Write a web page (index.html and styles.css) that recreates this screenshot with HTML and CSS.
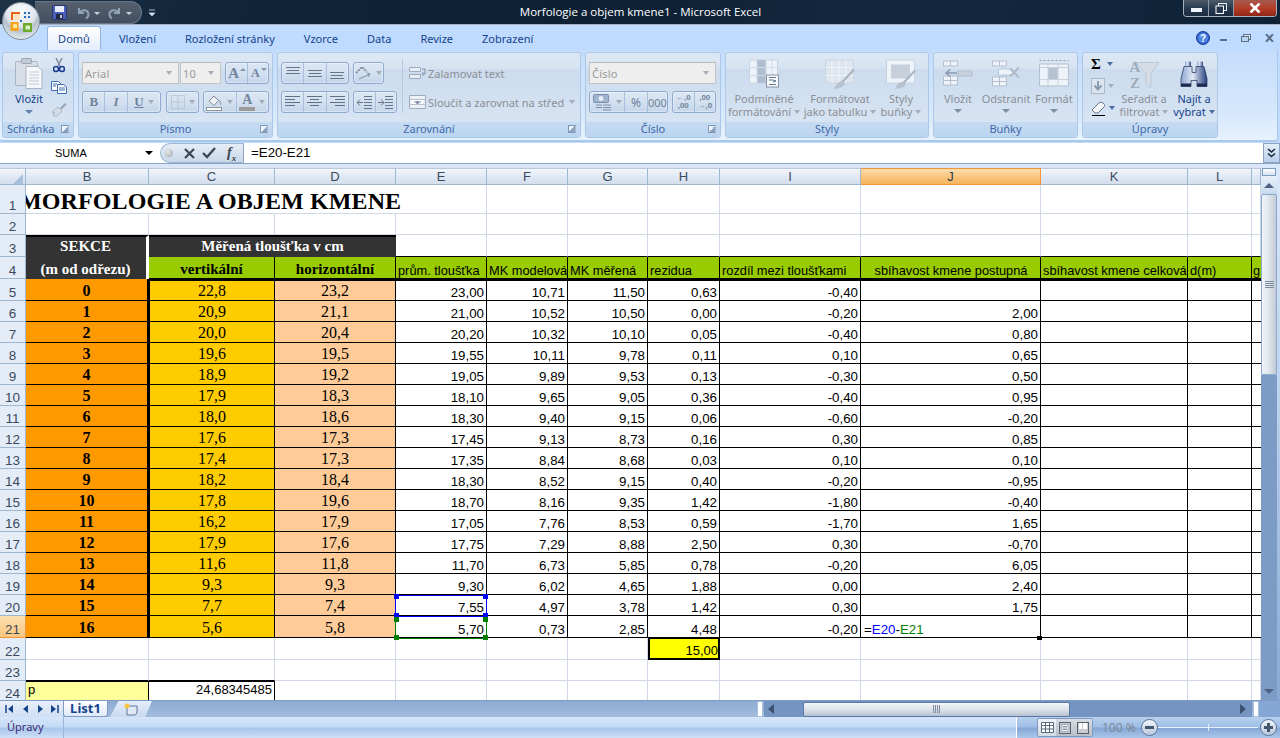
FILE: index.html
```html
<!DOCTYPE html>
<html lang="cs">
<head>
<meta charset="utf-8">
<title>Morfologie a objem kmene1 - Microsoft Excel</title>
<link rel="stylesheet" href="styles.css">
</head>
<body>
<div class="app">
<button class="office" aria-label="Office">
<svg width="42" height="42" viewBox="0 0 42 42">
<defs>
<radialGradient id="orb" cx="50%" cy="25%" r="80%"><stop offset="0" stop-color="#ffffff"/><stop offset=".5" stop-color="#dfe5ec"/><stop offset=".62" stop-color="#b5c0cc"/><stop offset="1" stop-color="#eef2f6"/></radialGradient>
</defs>
<circle cx="21" cy="21" r="18.5" fill="url(#orb)" stroke="#7f8a96"/>
<path d="M11 12h9v3h-6v5h-3z" fill="#e8631b"/>
<path d="M13 14h7v6h-7z" fill="#fbe3c4"/>
<path d="M10.500 22h8v9h-8z" fill="#f5a21d"/>
<path d="M13 24h4v4h-4z" fill="#ffe59c"/>
<path d="M23 23h9v9h-9z" fill="#6aa92a"/>
<path d="M25.500 25.500h4.500v4h-4.500z" fill="#e3f2c6"/>
<path d="M23 11h8v9h-8z" fill="#e7eef7"/>
<g fill="#2a6bc4"><rect x="24" y="12" width="2" height="2"/><rect x="28" y="12" width="2" height="2"/><rect x="24" y="16" width="2" height="2"/><rect x="28" y="16" width="2" height="2"/><rect x="20" y="20" width="2" height="2"/></g>
</svg>
</button>

<header class="titlebar">
<div class="qat">
<svg width="15" height="15" viewBox="0 0 15 15"><rect x=".5" y=".5" width="14" height="14" rx="1" fill="#4a5fb8" stroke="#2a3570"/><rect x="3" y="1" width="9" height="6" fill="#e6edf8"/><rect x="4" y="9" width="7" height="5" fill="#20283f"/><rect x="8" y="10" width="2" height="3" fill="#c8d0e0"/></svg>
<svg class="qat-undo" width="14" height="14" viewBox="0 0 14 14"><path d="M3 2v5h5M3.500 6.500C6 3 12 3.500 12.500 8c.2 2-1 3.500-2.500 4.500" fill="none" stroke="#8fa2b7" stroke-width="2"/></svg>
<i class="qat-arrow"></i>
<svg class="qat-redo" width="14" height="14" viewBox="0 0 14 14"><path d="M11 2v5H6M10.500 6.500C8 3 2 3.500 1.500 8c-.2 2 1 3.500 2.500 4.500" fill="none" stroke="#8fa2b7" stroke-width="2"/></svg>
<i class="qat-arrow"></i>
</div>
<svg class="qat-more" width="8" height="8" viewBox="0 0 8 8"><path d="M1 1h6M1 4h6L4 7z" fill="#c9d6e6" stroke="#c9d6e6" stroke-width=".8"/></svg>
<div class="doc-title">Morfologie a objem kmene1 - Microsoft Excel</div>
<div class="winbtns">
<span class="wb wb-min"><i></i></span>
<span class="wb wb-max"><svg width="12" height="11" viewBox="0 0 12 11"><rect x="3.500" y=".5" width="8" height="7" fill="none" stroke="#e8eef5"/><rect x="1" y="3" width="7.500" height="7.500" fill="#25384e" stroke="#fff"/></svg></span>
<span class="wb wb-close"><svg width="12" height="10" viewBox="0 0 12 10"><path d="M1.500 .5L10.500 9.500M10.500 .5L1.500 9.500" stroke="#fff" stroke-width="2.600"/></svg></span>
</div>
</header>

<nav class="tabs">
<span class="tab active">Domů</span><span class="tab">Vložení</span><span class="tab">Rozložení stránky</span><span class="tab">Vzorce</span><span class="tab">Data</span><span class="tab">Revize</span><span class="tab">Zobrazení</span>
<div class="doc-ctrl">
<svg width="14" height="14" viewBox="0 0 14 14"><circle cx="7" cy="7" r="6.500" fill="#2f62c9" stroke="#1d3f92"/><circle cx="7" cy="7" r="5" fill="#4e86e6"/><text x="7" y="10.500" text-anchor="middle" class="help-q">?</text></svg>
<svg class="dc-min" width="8" height="8" viewBox="0 0 8 8"><rect y="5" width="7" height="2" fill="#5b7086"/></svg>
<svg class="dc-max" width="10" height="8" viewBox="0 0 10 8"><rect x="2.500" y=".5" width="7" height="5" fill="#dfe9f6" stroke="#5b7086"/><rect x=".5" y="2.500" width="7" height="5" fill="#bcd3ef" stroke="#5b7086"/></svg>
<svg class="dc-x" width="9" height="8" viewBox="0 0 9 8"><path d="M1 0l7 8M8 0L1 8" stroke="#5b7086" stroke-width="2"/></svg>
</div>
</nav>

<div class="ribbon">
<section class="group g-clip">
<div class="body">
<div class="big paste">
<svg width="28" height="31" viewBox="0 0 28 31"><rect x=".5" y="3.500" width="22" height="24" rx="1" fill="#d9dee6" stroke="#aab4c2"/><rect x="6.500" y=".5" width="10" height="5" rx="1" fill="#c3cad4" stroke="#9ba6b5"/><path d="M11 8.500h12l4 4v18H11z" fill="#f5f7fa" stroke="#aab4c2"/><path d="M14 14h10M14 17h10M14 20h10M14 23h10M14 26h10" stroke="#c2cbd7"/></svg>
<span class="lbl">Vložit</span><i class="down"></i>
</div>
<div class="clip-small">
<svg width="12" height="15" viewBox="0 0 12 15"><path d="M3 0l4 8M9 0L5 8" stroke="#7f8ea0" stroke-width="1.500"/><circle cx="3" cy="11" r="2.500" fill="none" stroke="#1e3d92" stroke-width="1.600"/><circle cx="9" cy="11" r="2.500" fill="none" stroke="#1e3d92" stroke-width="1.600"/></svg>
<svg width="16" height="13" viewBox="0 0 16 13"><path d="M.5.500h7l2 2v7h-9z" fill="#fff" stroke="#3a6cb5"/><path d="M6.500 3.500h6l3 2.500v6.500h-9z" fill="#fff" stroke="#3a6cb5"/><path d="M2 3h4M2 5h3M8 7h6M8 9h6" stroke="#3a6cb5"/></svg>
<svg width="16" height="15" viewBox="0 0 16 15"><path d="M9 6l5-5 1.500 1.500-5 5z" fill="#98a4b3"/><path d="M2 9l5-4 4 4-5 5H3l-1-2 2-1-3 0z" fill="#d6dde6" stroke="#a3aebc" stroke-width=".8"/></svg>
</div>
</div>
<div class="label">Schránka<i class="launcher"></i></div>
</section>

<section class="group g-font">
<div class="body rows">
<div class="row">
<span class="select s-font">Arial<i class="tri"></i></span><span class="select s-size">10<i class="tri"></i></span>
<span class="btnbox bb-grow"><span class="cell"><span class="gl-a big-a">A</span><i class="up"></i></span><span class="cell"><span class="gl-a small-a">A</span><i class="dn"></i></span></span>
</div>
<div class="row r2">
<span class="btnbox bb-biu"><span class="cell c-b">B</span><span class="cell c-i">I</span><span class="cell c-u">U<i class="tri"></i></span></span>
<span class="btnbox bb-border"><span class="cell">
<svg width="14" height="14" viewBox="0 0 14 14"><path d="M.5.500h13v13H.5zM7 .5v13M.5 7h13" fill="none" stroke="#a5b2c3" stroke-dasharray="1 1"/></svg><i class="tri"></i></span></span>
<span class="btnbox bb-color"><span class="cell">
<svg width="17" height="17" viewBox="0 0 17 17"><path d="M3 7l5-5 4.500 4.500L8 11.500z" fill="#f0f2f5" stroke="#7f8b9b"/><path d="M12 6c2 1 3 3 2.500 5" stroke="#a6b0bd" fill="none" stroke-width="1.500"/><rect x=".5" y="13.500" width="15" height="3" fill="#fbfbf6" stroke="#8c96a3"/></svg><i class="tri"></i></span><span class="cell"><span class="fc-a">A<b></b></span><i class="tri"></i></span></span>
</div>
</div>
<div class="label center">Písmo<i class="launcher"></i></div>
</section>

<section class="group g-align">
<div class="body al-body">
<div class="rows al-left">
<div class="row">
<span class="btnbox bb-3"><span class="cell"><svg width="14" height="12" viewBox="0 0 14 12"><path d="M0 .5h14M1 3.500h12M0 6.500h14" stroke="#66778c"/></svg></span><span class="cell"><svg width="14" height="12" viewBox="0 0 14 12"><path d="M0 3.500h14M1 6.500h12M0 9.500h14" stroke="#66778c"/></svg></span><span class="cell"><svg width="14" height="12" viewBox="0 0 14 12"><path d="M0 5.500h14M1 8.500h12M0 11.500h14" stroke="#66778c"/></svg></span></span>
<span class="btnbox bb-or"><span class="cell">
<svg width="17" height="15" viewBox="0 0 17 15"><path d="M1 7l6-6 5 5" fill="none" stroke="#7f8fa3" stroke-width="2" stroke-dasharray="2 1"/><path d="M4 13L15 8" stroke="#7f8fa3"/><path d="M15 8l-3-1M15 8l-2 3" stroke="#7f8fa3"/></svg><i class="tri"></i></span></span>
</div>
<div class="row r2">
<span class="btnbox bb-3"><span class="cell"><svg width="15" height="12" viewBox="0 0 15 12"><path d="M0 .5h15M0 3.500h10M0 6.500h15M0 9.500h10" stroke="#5f7188"/></svg></span><span class="cell"><svg width="15" height="12" viewBox="0 0 15 12"><path d="M0 .5h15M3 3.500h9M0 6.500h15M3 9.500h9" stroke="#5f7188"/></svg></span><span class="cell"><svg width="15" height="12" viewBox="0 0 15 12"><path d="M0 .5h15M5 3.500h10M0 6.500h15M5 9.500h10" stroke="#5f7188"/></svg></span></span>
<span class="btnbox bb-ind"><span class="cell"><svg width="15" height="13" viewBox="0 0 15 13"><path d="M7 .5h8M7 3.500h8M7 6.500h8M7 9.500h8M7 12.500h8M6 6.500H0M3 3.500l-3 3 3 3" fill="none" stroke="#64768c"/></svg></span><span class="cell"><svg width="15" height="13" viewBox="0 0 15 13"><path d="M7 .5h8M7 3.500h8M7 6.500h8M7 9.500h8M7 12.500h8M0 6.500h6M3 3.500l3 3-3 3" fill="none" stroke="#64768c"/></svg></span></span>
</div>
</div>
<i class="vsep"></i>
<div class="rows al-right">
<div class="row txt-row"><svg width="17" height="14" viewBox="0 0 17 14"><path d="M.5 1.500h11v4H.5zM.5 8.500h11v4H.5z" fill="#e8eef5" stroke="#9dabbc"/><path d="M13 3h3v5h-3M14.500 6.500l-1.500 1.500 1.500 1.500" fill="none" stroke="#8292a6"/></svg><span class="lbl">Zalamovat text</span></div>
<div class="row r2 txt-row"><svg width="17" height="14" viewBox="0 0 17 14"><path d="M.5 .5h16v13H.5z" fill="#eef2f7" stroke="#9dabbc"/><path d="M.5 4.500h16M.5 9.500h16" stroke="#b5c1cf"/><rect x="3" y="5" width="11" height="4" fill="#fff"/><path d="M5 7h7" stroke="#768aa3"/><text x="8.500" y="9" text-anchor="middle" class="mini-a">a</text></svg><span class="lbl">Sloučit a zarovnat na střed</span><i class="tri"></i></div>
</div>
</div>
<div class="label center">Zarovnání<i class="launcher"></i></div>
</section>

<section class="group g-num">
<div class="body rows">
<div class="row"><span class="select s-num">Číslo<i class="tri"></i></span></div>
<div class="row r2">
<span class="btnbox bb-cur"><span class="cell c-cur"><svg width="19" height="17" viewBox="0 0 19 17"><rect x=".5" y=".5" width="15" height="8" rx="1" fill="#9fb4ce" stroke="#7c90ab"/><circle cx="8" cy="4.500" r="2.500" fill="#e6edf6"/><path d="M3 11h6M3 13.500h6M10 11h8M10 13.500h8M10 16h8" stroke="#7e90a8"/></svg><i class="tri"></i></span><span class="cell c-pc">%</span><span class="cell c-th">000</span></span>
<span class="btnbox bb-dec"><span class="cell c-dec"><span>←,0</span><span>,00</span></span><span class="cell c-dec"><span>,00</span><span>→,0</span></span></span>
</div>
</div>
<div class="label center">Číslo<i class="launcher"></i></div>
</section>

<section class="group g-styles">
<div class="body bigs">
<div class="big b-cf">
<svg width="30" height="30" viewBox="0 0 30 30"><path d="M.5.500h28v23H.5z" fill="#eef3f9" stroke="#c8d3e0"/><path d="M8 .5h9v23H8z" fill="#aebdcf"/><path d="M.5 8h28M.5 16h28M8 .5v23M17 .5v23M23 .5v23" stroke="#d1dae6"/><rect x="17.500" y="15.500" width="12" height="12" fill="#f7f9fb" stroke="#8293a8"/><path d="M20 18h7M20 20.500h4l3 1-3 1M20 25h7" stroke="#65788f" fill="none"/></svg>
<span class="lbl">Podmíněné<br>formátování<i class="tri inl"></i></span>
</div>
<div class="big b-ft">
<svg width="30" height="30" viewBox="0 0 30 30"><path d="M.5.500h28v23H.5z" fill="#dde5ef" stroke="#c8d3e0"/><path d="M.5 8h28M.5 16h28M7 .5v23M14 .5v23M21 .5v23" stroke="#eef3f8"/><path d="M29 10L16 24" stroke="#a9b4c1" stroke-width="2"/><path d="M17 21l-5 3-3 5c6 1 10-2 11-5z" fill="#b9c3cf"/></svg>
<span class="lbl">Formátovat<br>jako tabulku<i class="tri inl"></i></span>
</div>
<div class="big b-cs">
<svg width="30" height="30" viewBox="0 0 30 30"><path d="M.5.500h28v23H.5z" fill="#eef3f9" stroke="#c8d3e0"/><rect x="5" y="5" width="19" height="14" fill="#c6cfda"/><path d="M29 11L16 25" stroke="#a9b4c1" stroke-width="2"/><path d="M17 22l-5 2-3 5c6 1 10-2 11-4z" fill="#b9c3cf"/></svg>
<span class="lbl">Styly<br>buňky<i class="tri inl"></i></span>
</div>
</div>
<div class="label center">Styly</div>
</section>

<section class="group g-cells">
<div class="body bigs">
<div class="big">
<svg width="30" height="30" viewBox="0 0 30 30"><path d="M.5 1.500h14v5H.5zM.5 16.500h14v9H.5zM.5 21h14M7.500 16.500v9M7.500 1.500v5" fill="#eef3f9" stroke="#b2bfce"/><path d="M15 11.500h14v5H15z" fill="#c8d2de" stroke="#b2bfce"/><path d="M14 13.500H3M7 10l-4 3.500L7 17" fill="none" stroke="#8a99ac" stroke-width="1.500"/></svg>
<span class="lbl">Vložit</span><i class="down"></i>
</div>
<div class="big">
<svg width="30" height="30" viewBox="0 0 30 30"><path d="M1.500 1.500h14v5h-14zM1.500 17.500h14v9h-14zM1.500 22h14M8.500 17.500v9M8.500 1.500v5" fill="#eef3f9" stroke="#b2bfce"/><path d="M7.500 9.500h14v6h-14z" fill="#eef3f9" stroke="#97a6b8" stroke-dasharray="1 1"/><path d="M19 9l9 9M28 8l-9 9" stroke="#aebbca" stroke-width="2"/></svg>
<span class="lbl">Odstranit</span><i class="down"></i>
</div>
<div class="big">
<svg width="30" height="30" viewBox="0 0 30 30"><path d="M.5 1h29" stroke="#8a99ac" stroke-dasharray="2 2"/><path d="M.5 4.500h29v22H.5z" fill="#eef3f9" stroke="#b2bfce"/><rect x="9" y="8" width="10" height="12" fill="#b5c2d2"/><path d="M.5 8h29M.5 20h29M9 4.500v22M19 4.500v22" stroke="#c8d2de"/></svg>
<span class="lbl">Formát</span><i class="down"></i>
</div>
</div>
<div class="label center">Buňky</div>
</section>

<section class="group g-edit">
<div class="body bigs">
<div class="edit-small">
<div class="es-row"><span class="sigma">Σ</span><i class="tri blue"></i></div>
<div class="es-row"><svg width="14" height="16" viewBox="0 0 14 16"><rect x=".5" y=".5" width="13" height="15" fill="#dbe4ef" stroke="#a9b8ca"/><path d="M7 3v8M3.500 7.500L7 11.500l3.500-4" fill="none" stroke="#8a9cb2" stroke-width="2"/></svg><i class="tri"></i></div>
<div class="es-row"><svg width="15" height="15" viewBox="0 0 15 15"><path d="M1 9l7-7c1-1 3-1 4 0l1 1c1 1 1 2 0 3l-6 6H4z" fill="#f4f6f9" stroke="#6a7687"/><path d="M1 14.500h13" stroke="#000"/></svg><i class="tri blue"></i></div>
</div>
<div class="big b-sort">
<svg width="30" height="30" viewBox="0 0 30 30"><path d="M7 3h23l-8 11v14l-5-4V14z" fill="#d6dde7" stroke="#bcc7d4"/><text x="6" y="12" text-anchor="middle" class="sort-l">A</text><text x="6" y="28" text-anchor="middle" class="sort-l">Z</text></svg>
<span class="lbl">Seřadit a<br>filtrovat<i class="tri inl"></i></span>
</div>
<div class="big b-find">
<svg width="28" height="28" viewBox="0 0 28 28"><defs><linearGradient id="bin" x1="0" x2="1" y1="0" y2="0"><stop offset="0" stop-color="#8ea6d0"/><stop offset=".45" stop-color="#dfe7f5"/><stop offset="1" stop-color="#27407a"/></linearGradient></defs><rect x="5" y="1" width="6" height="5" rx="1" fill="url(#bin)"/><rect x="17" y="1" width="6" height="5" rx="1" fill="url(#bin)"/><path d="M4 6h8l0 6h4l0-6h8l3 12v8H17v-6h-6v6H1v-8z" fill="url(#bin)" stroke="#1e2f5c" stroke-width=".7"/><rect x="1" y="23" width="10" height="3" fill="#1d2b50"/><rect x="17" y="23" width="10" height="3" fill="#1d2b50"/></svg>
<span class="lbl on">Najít a<br>vybrat<i class="tri inl blue"></i></span>
</div>
</div>
<div class="label center">Úpravy</div>
</section>
</div>

<div class="formula">
<div class="namebox"><span>SUMA</span><i class="nb-arrow"></i></div>
<div class="fx-pill">
<i class="fx-dot"></i>
<svg class="fx-x" width="11" height="11" viewBox="0 0 11 11"><path d="M1 1l9 9M10 1L1 10" stroke="#3e4854" stroke-width="2.200"/></svg>
<svg class="fx-ok" width="14" height="12" viewBox="0 0 14 12"><path d="M1 6l4 4 8-9" fill="none" stroke="#3e4854" stroke-width="2.400"/></svg>
<span class="fx">f<sub>x</sub></span>
</div>
<div class="finput">=E20-E21</div>
<div class="fexpand"><svg width="9" height="10" viewBox="0 0 9 10"><path d="M1 1l3.500 3L8 1M1 5.500l3.500 3 3.500-3" fill="none" stroke="#1b2a3d" stroke-width="1.600"/></svg></div>
</div>

<div class="sheet-area">
<div class="grid-wrap">
<table class="grid">
<colgroup><col class="w-rh"><col class="w-b"><col class="w-c"><col class="w-d"><col class="w-e"><col class="w-f"><col class="w-g"><col class="w-h"><col class="w-i"><col class="w-j"><col class="w-k"><col class="w-l"><col class="w-m"></colgroup>
<thead><tr class="hd"><th class="corner"><svg width="10" height="10" viewBox="0 0 10 10"><path d="M10 0v10H0z" fill="#a9c0dc"/></svg></th><th>B</th><th>C</th><th>D</th><th>E</th><th>F</th><th>G</th><th>H</th><th>I</th><th class="sel">J</th><th>K</th><th>L</th><th></th></tr></thead>
<tbody>
<tr class="h29"><th>1</th><td colspan="4" class="title"><span>MORFOLOGIE A OBJEM KMENE</span></td><td></td><td></td><td></td><td></td><td></td><td></td><td></td><td></td></tr>
<tr class="h21"><th>2</th><td></td><td></td><td></td><td></td><td></td><td></td><td></td><td></td><td></td><td></td><td></td><td></td></tr>
<tr class="h22"><th>3</th><td class="dk bcell">SEKCE</td><td colspan="2" class="dk ccell">Měřená tloušťka v cm</td><td class="ln-b"></td><td class="ln-b"></td><td class="ln-b"></td><td class="ln-b"></td><td class="ln-b"></td><td class="ln-b"></td><td class="ln-b"></td><td class="ln-b"></td><td class="ln-b"></td></tr>
<tr class="h22 hrow"><th>4</th><td class="dk2 bcell">(m od odřezu)</td><td class="gr tb">vertikální</td><td class="gr tb">horizontální</td><td>prům. tloušťka</td><td>MK modelová</td><td>MK měřená</td><td>rezidua</td><td>rozdíl mezi tloušťkami</td><td class="mid">sbíhavost kmene postupná</td><td>sbíhavost kmene celková</td><td>d(m)</td><td>g</td></tr>
<tr class="h22 dr first"><th>5</th><td class="b">0</td><td class="c">22,8</td><td class="d">23,2</td><td>23,00</td><td>10,71</td><td>11,50</td><td>0,63</td><td>-0,40</td><td></td><td></td><td></td><td></td></tr>
<tr class="h21 dr"><th>6</th><td class="b">1</td><td class="c">20,9</td><td class="d">21,1</td><td>21,00</td><td>10,52</td><td>10,50</td><td>0,00</td><td>-0,20</td><td>2,00</td><td></td><td></td><td></td></tr>
<tr class="h21 dr"><th>7</th><td class="b">2</td><td class="c">20,0</td><td class="d">20,4</td><td>20,20</td><td>10,32</td><td>10,10</td><td>0,05</td><td>-0,40</td><td>0,80</td><td></td><td></td><td></td></tr>
<tr class="h21 dr"><th>8</th><td class="b">3</td><td class="c">19,6</td><td class="d">19,5</td><td>19,55</td><td>10,11</td><td>9,78</td><td>0,11</td><td>0,10</td><td>0,65</td><td></td><td></td><td></td></tr>
<tr class="h21 dr"><th>9</th><td class="b">4</td><td class="c">18,9</td><td class="d">19,2</td><td>19,05</td><td>9,89</td><td>9,53</td><td>0,13</td><td>-0,30</td><td>0,50</td><td></td><td></td><td></td></tr>
<tr class="h21 dr"><th>10</th><td class="b">5</td><td class="c">17,9</td><td class="d">18,3</td><td>18,10</td><td>9,65</td><td>9,05</td><td>0,36</td><td>-0,40</td><td>0,95</td><td></td><td></td><td></td></tr>
<tr class="h21 dr"><th>11</th><td class="b">6</td><td class="c">18,0</td><td class="d">18,6</td><td>18,30</td><td>9,40</td><td>9,15</td><td>0,06</td><td>-0,60</td><td>-0,20</td><td></td><td></td><td></td></tr>
<tr class="h21 dr"><th>12</th><td class="b">7</td><td class="c">17,6</td><td class="d">17,3</td><td>17,45</td><td>9,13</td><td>8,73</td><td>0,16</td><td>0,30</td><td>0,85</td><td></td><td></td><td></td></tr>
<tr class="h21 dr"><th>13</th><td class="b">8</td><td class="c">17,4</td><td class="d">17,3</td><td>17,35</td><td>8,84</td><td>8,68</td><td>0,03</td><td>0,10</td><td>0,10</td><td></td><td></td><td></td></tr>
<tr class="h21 dr"><th>14</th><td class="b">9</td><td class="c">18,2</td><td class="d">18,4</td><td>18,30</td><td>8,52</td><td>9,15</td><td>0,40</td><td>-0,20</td><td>-0,95</td><td></td><td></td><td></td></tr>
<tr class="h21 dr"><th>15</th><td class="b">10</td><td class="c">17,8</td><td class="d">19,6</td><td>18,70</td><td>8,16</td><td>9,35</td><td>1,42</td><td>-1,80</td><td>-0,40</td><td></td><td></td><td></td></tr>
<tr class="h21 dr"><th>16</th><td class="b">11</td><td class="c">16,2</td><td class="d">17,9</td><td>17,05</td><td>7,76</td><td>8,53</td><td>0,59</td><td>-1,70</td><td>1,65</td><td></td><td></td><td></td></tr>
<tr class="h21 dr"><th>17</th><td class="b">12</td><td class="c">17,9</td><td class="d">17,6</td><td>17,75</td><td>7,29</td><td>8,88</td><td>2,50</td><td>0,30</td><td>-0,70</td><td></td><td></td><td></td></tr>
<tr class="h21 dr"><th>18</th><td class="b">13</td><td class="c">11,6</td><td class="d">11,8</td><td>11,70</td><td>6,73</td><td>5,85</td><td>0,78</td><td>-0,20</td><td>6,05</td><td></td><td></td><td></td></tr>
<tr class="h21 dr"><th>19</th><td class="b">14</td><td class="c">9,3</td><td class="d">9,3</td><td>9,30</td><td>6,02</td><td>4,65</td><td>1,88</td><td>0,00</td><td>2,40</td><td></td><td></td><td></td></tr>
<tr class="h21 dr"><th>20</th><td class="b">15</td><td class="c">7,7</td><td class="d">7,4</td><td>7,55</td><td>4,97</td><td>3,78</td><td>1,42</td><td>0,30</td><td>1,75</td><td></td><td></td><td></td></tr>
<tr class="h22 dr"><th class="sel">21</th><td class="b">16</td><td class="c">5,6</td><td class="d">5,8</td><td>5,70</td><td>0,73</td><td>2,85</td><td>4,48</td><td>-0,20</td><td class="edit">=<span class="ref-b">E20</span>-<span class="ref-g">E21</span></td><td></td><td></td><td></td></tr>
<tr class="h22"><th>22</th><td></td><td></td><td></td><td></td><td></td><td></td><td class="sum">15,00</td><td></td><td></td><td></td><td></td><td></td></tr>
<tr class="h21"><th>23</th><td class="ln-b"></td><td class="ln-b"></td><td></td><td></td><td></td><td></td><td></td><td></td><td></td><td></td><td></td><td></td></tr>
<tr class="h21"><th>24</th><td class="p">p</td><td class="pv">24,68345485</td><td></td><td></td><td></td><td></td><td></td><td></td><td></td><td></td><td></td><td></td></tr>
</tbody>
</table>
<div class="range blue"><i class="tl"></i><i class="tr"></i><i class="bl"></i><i class="br"></i></div>
<div class="range green"><i class="tl"></i><i class="tr"></i><i class="bl"></i><i class="br"></i></div>
<i class="fill-handle"></i>
</div>
<aside class="vscroll">
<i class="split-v"></i>
<span class="sb-btn"><i class="ar-up"></i></span>
<span class="thumb-v"><svg width="9" height="8" viewBox="0 0 9 8"><path d="M0 .5h9M0 2.500h9M0 4.500h9M0 6.500h9" stroke="#7d8a9a"/></svg></span>
<span class="track-v"></span>
<span class="sb-end"><i class="ar-dn"></i></span>
</aside>
</div>

<div class="hbar">
<div class="sheetnav">
<svg width="56" height="10" viewBox="0 0 56 10"><path d="M1 1v8" stroke="#15428b" stroke-width="1.500"/><path d="M8 1v8L3 5zM23 1v8l-5-4zM33 1v8l5-4zM46 1v8l5-4z" fill="#15428b"/><path d="M53 1v8" stroke="#15428b" stroke-width="1.500"/></svg>
</div>
<span class="sheet-tab">List1</span>
<span class="new-tab"><svg width="16" height="13" viewBox="0 0 16 13"><path d="M4 3h10v7l-2 2H4z" fill="#dfe8f4" stroke="#5f7896"/><circle cx="4" cy="3" r="2.500" fill="#f6c544"/></svg></span>
<span class="hfill"></span>
<i class="split-h"></i>
<span class="track-h">
<i class="ar-l"></i>
<span class="thumb-h"><svg width="8" height="8" viewBox="0 0 8 8"><path d="M.5 0v8M2.500 0v8M4.500 0v8M6.500 0v8" stroke="#7d8a9a"/></svg></span>
<i class="ar-r"></i>
</span>
<i class="split-h end"></i>
<span class="hfill-r"></span>
</div>

<footer class="status">
<div class="st-left"><span>Úpravy</span></div>
<div class="st-mid"></div>
<div class="st-right">
<span class="views">
<span class="v v1"><svg width="13" height="11" viewBox="0 0 13 11"><path d="M.5.500h12v10H.5zM4.500.5v10M8.500.5v10M.5 3.500h12M.5 7h12" fill="#fff" stroke="#5a6a7d"/></svg></span>
<span class="v v2"><svg width="12" height="12" viewBox="0 0 12 12"><rect x=".5" y=".5" width="11" height="11" fill="#c8ccd2" stroke="#58626f"/><rect x="3" y="2.500" width="6" height="7" fill="#fff" stroke="#7c8794" stroke-width=".6"/><path d="M4 4.500h4M4 6h4M4 7.500h4" stroke="#8a95a2"/></svg></span>
<span class="v v3"><svg width="12" height="12" viewBox="0 0 12 12"><rect x=".5" y=".5" width="11" height="11" fill="#c8ccd2" stroke="#58626f"/><rect x="2" y="1" width="3" height="6" fill="#fff"/><rect x="6" y="1" width="4" height="6" fill="#fff"/></svg></span>
</span>
<span class="zoomtxt">100 %</span>
<span class="zbtn"><b class="minus"></b></span>
<span class="slider"><i></i></span>
<span class="zbtn"><b class="minus"></b><b class="plus"></b></span>
</div>
</footer>
</div>
</body>
</html>
```
FILE: styles.css
```css
*{box-sizing:border-box}
html,body{margin:0;padding:0;height:738px;overflow:hidden}
body{font-family:"Noto Sans","DejaVu Sans",sans-serif;font-size:11px;background:#bfdbff}
i{display:block}
.app{position:relative;width:1280px;height:738px;display:flex;flex-direction:column;overflow:hidden}

/* office orb */
.office{position:absolute;left:0;top:0;width:42px;height:42px;padding:0;border:0;background:none;z-index:3}

/* title bar */
.titlebar{height:25px;flex:none;display:flex;align-items:flex-start;position:relative;background:linear-gradient(100deg,#1d3246 0,#10253a 18%,#0d2034 45%,#13283f 70%,#0e2237 100%);border-bottom:1px solid #a5b1bf}
.qat{margin:1px 0 0 35px;width:107px;height:23px;background:linear-gradient(#56606f,#414f60);border:1px solid #677586;border-left:0;border-radius:0 12px 12px 0;display:flex;align-items:center;padding-left:17px}
.qat-undo{margin-left:9px}
.qat-arrow{width:0;height:0;border:3px solid transparent;border-top:3px solid #c9d3de;border-bottom:0;margin:2px 8px 0 4px}
.qat-more{margin:9px 0 0 6px}
.doc-title{position:absolute;left:1px;right:0;top:4px;text-align:center;color:#fff;font:11.500px/16px "Open Sans",sans-serif;white-space:nowrap}
.winbtns{margin-left:auto;margin-right:3px;display:flex;height:17px;border:1px solid #a8b0bb;border-top:0;border-radius:0 0 4px 4px;overflow:hidden}
.wb{display:flex;align-items:center;justify-content:center;height:16px;border-right:1px solid #8e98a5}
.wb-min{width:25px;background:linear-gradient(#4d5a69,#25384e 55%,#1b2c40)}
.wb-min i{width:11px;height:4px;background:#eef3f8;margin-top:4px}
.wb-max{width:25px;background:linear-gradient(#4d5a69,#25384e 55%,#1b2c40)}
.wb-close{width:42px;border:0;background:linear-gradient(#a65a4e,#b43b26 55%,#8f2615)}

/* tabs */
.tabs{height:25px;flex:none;display:flex;align-items:flex-end;padding-left:47px;background:#bfdbff;color:#15428b;font-size:11px}
.tab{height:23px;line-height:24px;padding:0 14.500px;white-space:nowrap}
.tab.active{width:54px;padding:0;text-align:center;margin-right:3.500px;height:24px;background:linear-gradient(#fdfeff,#e4eefa);border:1px solid #93b4df;border-bottom:0;border-radius:3px 3px 0 0;position:relative;z-index:1}
.doc-ctrl{margin-left:auto;display:flex;align-items:center;height:25px;padding-right:6px}
.help-q{font:bold 10px "Liberation Sans",sans-serif;fill:#fff}
.dc-min{margin-left:10px}
.dc-max{margin-left:13px}
.dc-x{margin-left:14px}

/* ribbon */
.ribbon{height:92px;flex:none;display:flex;gap:4px;padding:2px 60px 0 2px;margin-right:2px;background:linear-gradient(#c4dcfb,#d7e8fc 70%,#e6f2fd);border:1px solid #a9c8ea;border-width:0 1px 2px 0;border-radius:0 0 3px 3px}
.group{flex:none;height:86px;display:flex;flex-direction:column;border:1px solid #adc7e6;border-radius:3px;overflow:hidden;background:linear-gradient(#dde8f4 0,#d7e3f1 18%,#ccdcee 20%,#d4e2f2 70%,#dae7f6 100%)}
.g-clip{width:72px}
.g-font{width:195px}
.g-align{width:304px}
.g-num{width:136px}
.g-styles{width:204px}
.g-cells{width:145px}
.g-edit{width:136px}
.body{height:69px;flex:none;display:flex}
.label{height:15px;flex:none;position:relative;background:linear-gradient(#c5dbf2,#bcd5f0);color:#3e6aaa;font-size:11px;line-height:14px;padding-left:4px}
.label.center{text-align:center;padding:0}
.launcher{position:absolute;right:4px;top:3px;width:8px;height:8px;border:1px solid #7f97b6;border-right-color:#a9bbd1;background:linear-gradient(135deg,#eef4fb 50%,#8ba4c4 50%)}
.lbl{color:#8c8f96;font-size:11px;line-height:13px;text-align:center;white-space:nowrap}
.lbl.on{color:#15428b}
.big{flex:none;display:flex;flex-direction:column;align-items:center}
.big svg{flex:none;height:33px}
.big .lbl{margin-top:1px}
.down{width:0;height:0;border:4px solid transparent;border-top-color:#7c8ea4;border-bottom:0;margin-top:4px}
.tri{display:inline-block;width:0;height:0;border:3.500px solid transparent;border-top:4px solid #a3adb9;border-bottom:0;flex:none}
.tri.blue{border-top-color:#4b6ea3}
.tri.inl{margin-left:3px;vertical-align:2px}

/* clipboard */
.g-clip .body{padding:4px 0 0 8px}
.paste{width:36px}
.paste .lbl{color:#15428b;margin-top:2px}
.paste .down{border-top-color:#15428b;opacity:.6;margin-top:5px}
.clip-small{margin-left:3px;display:flex;flex-direction:column;gap:8px;align-items:center;padding-top:1px;width:18px}

/* two row groups */
.rows{flex-direction:column;padding:9px 0 0 3px;display:flex}
.row{display:flex;height:22px;align-items:stretch}
.row.r2{margin-top:7px}
.select{position:relative;display:flex;align-items:center;justify-content:space-between;background:#eeeeee;border:1px solid #c4c4c4;border-top-color:#b8b8b8;color:#9a9a9a;padding:0 6px 0 2px;font-size:11px;letter-spacing:.2px;height:22px}
.s-font{width:97px;margin-right:1px}
.s-size{width:41px}
.s-num{width:127px}
.btnbox{display:flex;height:22px;border:1px solid #8fa9cf;border-radius:3px;background:linear-gradient(#dce7f4,#d3e0f0 50%,#c5d6ec);box-shadow:inset 0 0 0 1px rgba(255,255,255,.35);overflow:hidden}
.cell{flex:1 1 0;display:flex;align-items:center;justify-content:center;border-right:1px solid #a9c0dc;gap:4px;position:relative;min-width:0}
.cell:last-child{border-right:0}
.bb-grow{width:44px;margin-left:4px}
.gl-a{font-family:"Liberation Serif",serif;font-weight:bold;color:#72859c;line-height:1}
.big-a{font-size:15px}
.small-a{font-size:12px}
.up,.dn{width:0;height:0;border:3px solid transparent;margin:-8px -2px 0 -3px}
.up{border-bottom:3px solid #8294aa;border-top:0}
.dn{border-top:3px solid #8294aa;border-bottom:0}
.bb-biu{width:79px}
.c-b,.c-i,.c-u{font:bold 13px "Liberation Serif",serif;color:#70829a}
.c-i{font-style:italic}
.c-u{text-decoration:underline;flex:1.500}
.c-u .tri{text-decoration:none}
.bb-border{width:33px;margin-left:5px}
.bb-color{width:66px;margin-left:4px}
.fc-a{display:flex;flex-direction:column;align-items:center;font:bold 14px/12px "Liberation Serif",serif;color:#72859c}
.fc-a b{display:block;width:16px;height:4px;background:#9b9b9b;margin-top:1px}

/* alignment */
.g-align .body{padding:0}
.al-left{width:120px}
.bb-3{width:68px}
.bb-or{width:31px;margin-left:4px}
.bb-ind{width:44px;margin-left:4px}
.vsep{width:1px;height:54px;margin:6px 0 0 4px;background:#b5c8e0}
.al-right{padding-left:6px}
.txt-row{align-items:center;gap:2px}
.txt-row .tri{margin-left:3px}
.mini-a{font:bold 5px "Liberation Sans",sans-serif;fill:#5f738c}

/* number */
.bb-cur{width:79px}
.c-cur{flex:1.600}
.c-pc{color:#6f8198;font-size:12px}
.c-th{color:#6f8198;font-size:11px;flex:.9}
.bb-dec{width:44px;margin-left:4px}
.c-dec{flex-direction:column;gap:0;font:bold 8px/8px "Liberation Sans",sans-serif;color:#72859c}

/* large buttons */
.bigs{padding-top:5px}
.b-cf{width:70px;margin-left:3px}
.b-ft{width:76px;margin-left:3px}
.b-cs{width:46px}
.g-cells .big{width:48px}
.edit-small{width:33px;padding:0 0 0 8px;display:flex;flex-direction:column;gap:4px;margin-top:-3px}
.es-row{height:18px;display:flex;align-items:center;gap:3px}
.sigma{font:bold 15px/16px "Liberation Serif",serif;color:#000;width:13px}
.b-sort{width:56px}
.b-find{width:44px}
.sort-l{font:bold 15px "Liberation Serif",serif;fill:#a0abb9}

/* formula bar */
.formula{height:21px;flex:none;display:flex;background:#fff;border-bottom:1px solid #8aa3c0;margin-top:1px}
.namebox{width:160px;display:flex;align-items:center;justify-content:space-between;font:11px "Liberation Sans",sans-serif;color:#000;padding:0 7px 0 55px}
.nb-arrow{width:0;height:0;border:4px solid transparent;border-top:4px solid #000;border-bottom:0}
.fx-pill{width:84px;height:20px;display:flex;align-items:center;background:linear-gradient(#e6edf6,#c9d8ea);border:1px solid #9db6d3;border-right:1px solid #8aa3c0;border-radius:12px 0 0 12px;padding-left:4px}
.fx-dot{width:8px;height:8px;border-radius:50%;background:radial-gradient(circle at 35% 35%,#e9e9e9,#a1a6ad)}
.fx-x{margin-left:11px}
.fx-ok{margin-left:7px}
.fx{margin-left:11px;font:italic bold 14px/14px "Liberation Serif",serif;color:#39434f}
.fx sub{font-size:9px;line-height:0}
.finput{flex:1;padding:1px 0 0 7px;font:13.300px/17px "Liberation Sans",sans-serif;color:#000}
.fexpand{width:17px;display:flex;align-items:center;justify-content:center;background:linear-gradient(#e4eefa,#b9cfe9);border:1px solid #8aa3c0}

/* sheet */
.sheet-area{flex:none;height:536px;display:flex;overflow:hidden}
.grid-wrap{position:relative;width:1261px;padding-top:4px;overflow:hidden;background:#dbe7f6;flex:none}
.grid{table-layout:fixed;width:1261px;border-collapse:separate;border-spacing:0;background:#fff;font:13px/14px "Liberation Sans",sans-serif;color:#000}
.w-rh{width:26px}.w-b{width:123px}.w-c{width:126px}.w-d{width:121px}.w-e{width:91px}.w-f{width:81px}.w-g{width:80px}.w-h{width:72px}.w-i{width:141px}.w-j{width:180px}.w-k{width:147px}.w-l{width:64px}.w-m{width:9px}
.hd{height:17px}
.hd th{background:linear-gradient(#f3f6fb,#dfe7f3 55%,#d3deed);border-right:1px solid #9eb6ce;border-bottom:1px solid #9eb6ce;border-top:1px solid #b7c9de;font-weight:normal;color:#3b4a5e;padding:0;font-size:13px;line-height:14px;overflow:hidden}
.hd th.sel{background:linear-gradient(#fbdfae,#f8c47a 55%,#f6b45e);border-color:#f29536;color:#2d3a4c}
.corner{background:#dbe6f3;text-align:right}
.corner svg{display:block;margin:5px 2px 0 auto}
.h29{height:29px}.h21{height:21px}.h22{height:22px}
tbody th{background:#e4ecf7;border-right:1px solid #9eb6ce;border-bottom:1px solid #9eb6ce;font-weight:normal;color:#3b4a5e;text-align:center;vertical-align:bottom;font-size:13.500px;line-height:15px;padding:0}
tbody th.sel{background:linear-gradient(#fde0ae,#f9c77f);border-bottom-color:#f29536;border-right-color:#f29536}
td{padding:0 2px 1px;border-right:1px solid #d0d7e5;border-bottom:1px solid #d0d7e5;white-space:nowrap;overflow:hidden;vertical-align:bottom}
.title{padding:0;position:relative;text-align:left}
.title span{display:block;margin:0 0 -2px -7px;font:bold 24px/27px "Liberation Serif",serif;letter-spacing:.12px;white-space:pre}
.dk,.dk2{background:#333333;color:#fff;text-align:center;font:bold 15px/18px "Liberation Serif",serif;padding:0 0 2px}
.dk{border-top:2px solid #000;border-bottom:0}
.dk2{border-bottom:0;padding-bottom:1px}
.ccell{border-right:0;border-left:0}
.bcell{border-right:3px solid #fff;padding-right:1px}
.ln-b{border-bottom-color:#000}
.hrow td{background:#99cc00;border-right-color:#000;border-bottom-color:#000;padding:0 1px 0 2px;font-size:12.800px}
.hrow td:nth-child(2){background:#333;border-right-color:#fff;border-bottom:0;padding:0 1px 1px 0;font-size:15px}
.hrow .tb{font:bold 15px/18px "Liberation Serif",serif;text-align:center;padding:0}
.hrow .mid{text-align:center}
.hrow td:last-child{border-right:0;padding-left:1px}
.dr td{text-align:right;border-right-color:#000;border-bottom-color:#000;font-size:13.300px;padding-bottom:0}
.dr td:last-child{border-right:0}
.dr .b{background:#ff9900;font:bold 16px/18px "Liberation Serif",serif;text-align:center;padding:0;border-right:2px solid #000}
.dr .c{background:#ffcc00;font:16px/18px "Liberation Serif",serif;text-align:center;padding:0;border-left:1px solid #000}
.dr .d{background:#ffcc99;font:16px/18px "Liberation Serif",serif;text-align:center;padding:0}
.first td:not(.b){border-top:2px solid #000}
.edit{text-align:left !important;padding-left:3px}
.ref-b{color:#0000ff}
.ref-g{color:#008000}
.sum{background:#ffff00;text-align:right;border:2px solid #000;border-top-width:1px;padding:0}
.p{background:#ffff99;border-top:1px solid #000;border-right-color:#000;border-bottom:0;padding:1px 2px 0;vertical-align:top}
.pv{background:#fff;border-top:1px solid #000;border-right-color:#000;text-align:right;border-bottom:0;padding:1px 2px 0;vertical-align:top}

/* formula reference overlays */
.range{position:absolute;left:395px;width:92px;height:22px;border:1px solid;pointer-events:none}
.range.blue{top:431px;border-color:#0000ff}
.range.green{top:453px;border-color:#008000;border-top:0}
.range i{position:absolute;width:5px;height:5px}
.range.blue i{background:#0000ff}
.range.green i{background:#008000}
.range .tl{left:-2px;top:-2px}.range .tr{right:-2px;top:-2px}.range .bl{left:-2px;bottom:-2px}.range .br{right:-2px;bottom:-2px}
.range.green .tl,.range.green .tr{top:0}
.fill-handle{position:absolute;left:1037px;top:472px;width:5px;height:4px;background:#000;border:1px solid #000}

/* vertical scrollbar */
.vscroll{flex:1;display:flex;flex-direction:column;padding-top:4px;background:linear-gradient(#dbe8f9,#bcd2ee 45%,#88a8d5);padding-right:3px}
.vscroll>*{flex:none}
.split-v{height:8px;margin:0 1px;background:linear-gradient(#fff,#d6e3f3);border:1px solid #7f9dc4}
.sb-btn{height:18px;background:linear-gradient(#e8f0fa,#c8d9ee);display:flex;align-items:center;justify-content:center}
.ar-up{width:0;height:0;border:5px solid transparent;border-bottom:5px solid #4d6185;border-top:0}
.ar-dn{width:0;height:0;border:5px solid transparent;border-top:5px solid #4d6185;border-bottom:0}
.thumb-v{height:181px;border:1px solid #8ba7cb;border-radius:2px;background:linear-gradient(90deg,#f2f5f9,#dfe5ec 50%,#c2cad5);display:flex;align-items:center;justify-content:center}
.track-v{flex:1 !important;background:#7c9bc5}
.sb-end{height:17px;background:#7c9bc5;display:flex;align-items:center;justify-content:center}

/* horizontal strip */
.hbar{height:17px;flex:none;display:flex;align-items:stretch;background:linear-gradient(#8dabd1,#a3bcdc);border-top:1px solid #7e9cc3}
.sheetnav{width:63px;background:linear-gradient(#e8f0fb,#cfdef2);display:flex;align-items:center;padding-left:5px;flex:none}
.sheet-tab{width:45px;flex:none;text-align:center;font:bold 13px/15px "Noto Sans",sans-serif;color:#15428b;background:linear-gradient(#fff,#dfeafa);border-radius:0 0 3px 3px;border:1px solid #7e9cc3;border-top:0}
.new-tab{width:42px;flex:none;margin-left:2px;background:linear-gradient(#e5eefa,#c8d9ef);clip-path:polygon(0 100%,20% 0,100% 0,84% 100%);display:flex;align-items:center;justify-content:center}
.hfill{width:604px;flex:none}
.split-h{width:6px;flex:none;background:#fff;border:1px solid #a7bfdc;margin:0 1px}
.split-h.end{margin:0 0 0 1px}
.track-h{width:488px;flex:none;display:flex;align-items:center;background:#7594c1;padding-left:4px}
.hfill-r{flex:1;background:#86a7d5}
.ar-l{width:0;height:0;border:5px solid transparent;border-right:6px solid #3c4f70;border-left:0}
.ar-r{width:0;height:0;border:5px solid transparent;border-left:6px solid #3c4f70;border-right:0;margin-left:auto;margin-right:6px}
.thumb-h{margin-left:29px;width:267px;height:15px;background:linear-gradient(#f4f6f9,#dde3ea 50%,#b7c1ce);border:1px solid #5b79a5;border-radius:2px;display:flex;align-items:center;justify-content:center}

/* status */
.status{height:21px;flex:none;display:flex;background:linear-gradient(#d6e6fb,#c4daf6 45%,#a9c7ed 55%,#cddff7);font-size:11px;color:#3c2c6e}
.st-left{width:64px;padding:2px 0 0 7px;border-right:1px solid #98b5da}
.st-mid{flex:1}
.st-right{width:264px;display:flex;align-items:center;padding-left:20px;background:linear-gradient(#b7d0ee,#a0bfe6 45%,#87a8d6 55%,#aac6ea);border-left:1px solid #fff}
.views{display:flex;width:56px;height:19px;border:1px solid #7e9ac0;border-radius:2px;background:linear-gradient(#f1f4f8,#d4dae2);flex:none}
.v{flex:1;display:flex;align-items:center;justify-content:center}
.v2,.v3{background:linear-gradient(#d9dde3,#b9bec6)}
.zoomtxt{margin-left:9px;width:38px;color:#7c8899;font-size:12px;flex:none}
.zbtn{width:17px;height:17px;border-radius:50%;background:linear-gradient(#eff4fa,#b9c9dd);border:1px solid #5c7698;position:relative;flex:none;margin-left:1px}
.minus{position:absolute;left:3px;top:6px;width:9px;height:3px;background:#44566e}
.plus{position:absolute;left:6px;top:3px;width:3px;height:9px;background:#44566e}
.slider{width:100px;height:1px;background:#e8f0fa;flex:none;position:relative;margin:0 1px 0 0}
.slider i{position:absolute;left:50px;top:-3px;width:1px;height:7px;background:#e8f0fa}
```
